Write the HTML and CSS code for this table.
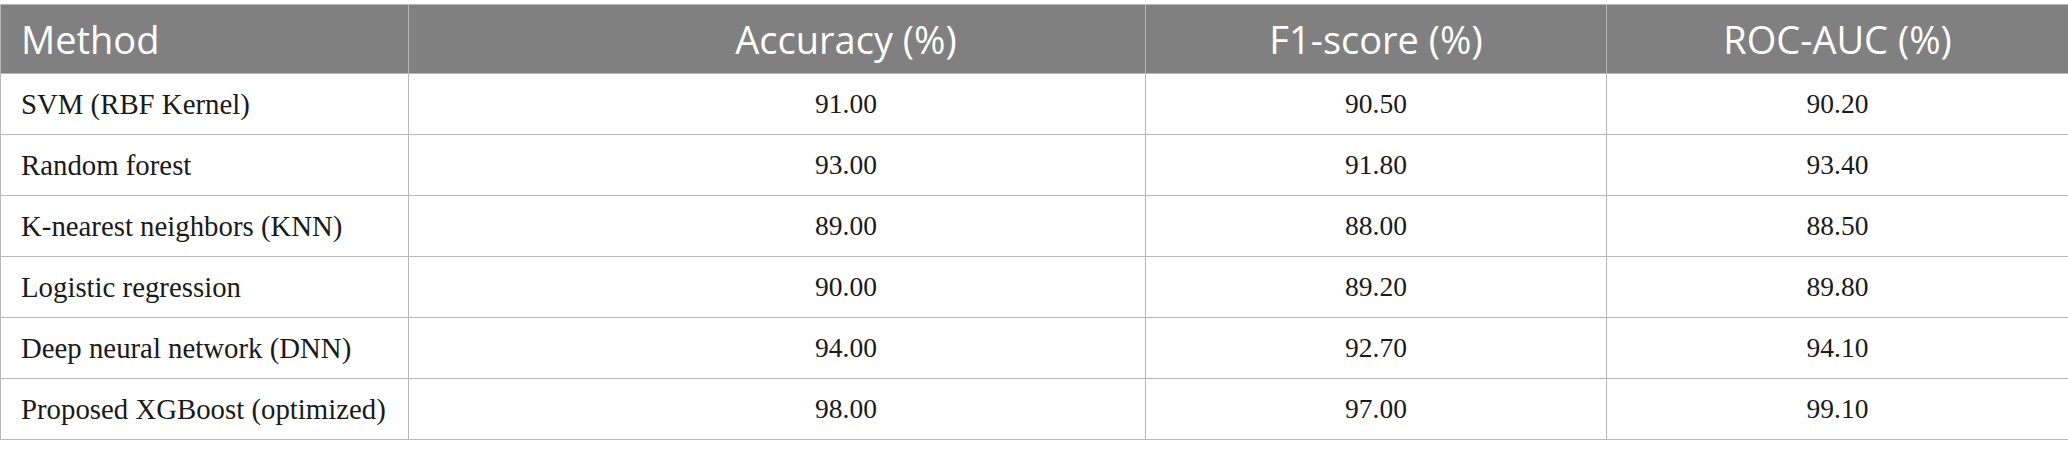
FILE: index.html
```html
<!DOCTYPE html>
<html>
<head>
<meta charset="utf-8">
<link rel="stylesheet" href="styles.css">
</head>
<body>
<table class="results">
  <colgroup>
    <col class="c-method">
    <col class="c-acc">
    <col class="c-f1">
    <col class="c-roc">
  </colgroup>
  <thead>
    <tr>
      <th class="left">Method</th>
      <th class="acc">Accuracy (%)</th>
      <th>F1-score (%)</th>
      <th>ROC-AUC (%)</th>
    </tr>
  </thead>
  <tbody>
    <tr><td class="left">SVM (RBF Kernel)</td><td class="acc">91.00</td><td>90.50</td><td>90.20</td></tr>
    <tr><td class="left">Random forest</td><td class="acc">93.00</td><td>91.80</td><td>93.40</td></tr>
    <tr><td class="left">K-nearest neighbors (KNN)</td><td class="acc">89.00</td><td>88.00</td><td>88.50</td></tr>
    <tr><td class="left">Logistic regression</td><td class="acc">90.00</td><td>89.20</td><td>89.80</td></tr>
    <tr><td class="left">Deep neural network (DNN)</td><td class="acc">94.00</td><td>92.70</td><td>94.10</td></tr>
    <tr><td class="left">Proposed XGBoost (optimized)</td><td class="acc">98.00</td><td>97.00</td><td>99.10</td></tr>
  </tbody>
</table>
</body>
</html>
```

FILE: styles.css
```css
html, body {
  margin: 0;
  padding: 0;
  background: #ffffff;
}
body {
  padding-top: 4px;
}
.results {
  width: 2068px;
  border-collapse: collapse;
  table-layout: fixed;
}
.c-method { width: 408px; }
.c-acc { width: 737px; }
.c-f1 { width: 461px; }
.c-roc { width: 462px; }
.results th,
.results td {
  border: 1px solid #b8b8b8;
  text-align: center;
  vertical-align: middle;
  padding: 0 20px;
}
.results th {
  background: #7f807f;
  color: #ffffff;
  font-family: "Open Sans", "Noto Sans", sans-serif;
  font-weight: 400;
  font-size: 38px;
  height: 68px;
}
.results td {
  font-family: "Liberation Serif", "Times New Roman", serif;
  font-size: 27.5px;
  color: #1a1a1a;
  height: 60px;
}
.results td.left {
  font-size: 28.8px;
}
.results .left {
  text-align: left;
}
.results .acc {
  padding-left: 158px;
}
```
